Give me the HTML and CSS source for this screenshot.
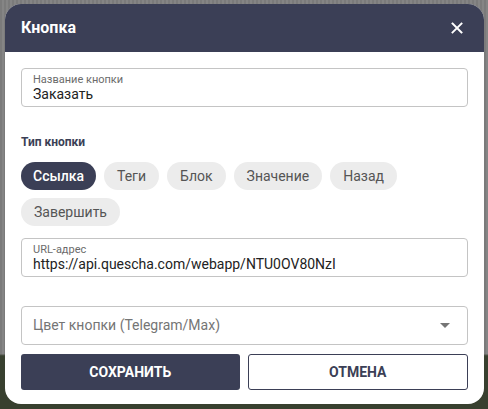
FILE: index.html
```html
<!DOCTYPE html>
<html lang="ru">
<head>
<meta charset="utf-8">
<link rel="stylesheet" href="styles.css">
</head>
<body>
<div class="backdrop">
  <div class="dialog">
    <div class="header">
      <span class="title">Кнопка</span>
      <svg class="close" width="12" height="12" viewBox="0 0 12 12"><path d="M1.5 1.5 L10.5 10.5 M10.5 1.5 L1.5 10.5" stroke="#fff" stroke-width="1.9" stroke-linecap="square"/></svg>
    </div>
    <div class="body">
      <div class="field">
        <div class="label">Название кнопки</div>
        <div class="value">Заказать</div>
      </div>
      <div class="section">Тип кнопки</div>
      <div class="chips">
        <span class="chip active">Ссылка</span>
        <span class="chip">Теги</span>
        <span class="chip">Блок</span>
        <span class="chip">Значение</span>
        <span class="chip">Назад</span>
        <span class="chip">Завершить</span>
      </div>
      <div class="field url">
        <div class="label">URL-адрес</div>
        <div class="value">https://api.quescha.com/webapp/NTU0OV80NzI</div>
      </div>
      <div class="select">
        <span class="placeholder">Цвет кнопки (Telegram/Max)</span>
        <svg class="arrow" width="10" height="5" viewBox="0 0 10 5"><path d="M0 0 H10 L5 5 Z" fill="#757575"/></svg>
      </div>
      <div class="actions">
        <button class="btn primary">СОХРАНИТЬ</button>
        <button class="btn secondary">ОТМЕНА</button>
      </div>
    </div>
  </div>
</div>
</body>
</html>
```
FILE: styles.css
```css
html, body {
  margin: 0;
  padding: 0;
  width: 488px;
  height: 409px;
  overflow: hidden;
  font-family: Roboto, "Liberation Sans", sans-serif;
}
.backdrop {
  width: 488px;
  height: 409px;
  box-sizing: border-box;
  padding: 4px 4px 0 5px;
  background:
    linear-gradient(to bottom, transparent 0, transparent 86.5%, #38402f 87%, #38402f 100%),
    repeating-linear-gradient(to right, #7b7b7b 0, #7b7b7b 2px, #858585 2px, #858585 4px),
    #808080;
}
.dialog {
  width: 479px;
  height: 400px;
  background: #fff;
  border-radius: 16px;
  overflow: hidden;
  display: flex;
  flex-direction: column;
}
.header {
  height: 48px;
  flex: none;
  background: #3b3f56;
  display: flex;
  align-items: center;
  justify-content: space-between;
  padding: 0 21px 0 16px;
}
.title {
  color: #fff;
  font-size: 16px;
  font-weight: 700;
  margin-top: -1px;
}
.close {
  display: block;
  margin-top: -1px;
}
.body {
  padding: 16px 16px 0 16px;
  display: flex;
  flex-direction: column;
}
.field {
  height: 39px;
  flex: none;
  box-sizing: border-box;
  border: 1px solid #c4c4c4;
  border-radius: 4px;
  padding: 4px 11px 0 11px;
}
.label {
  font-size: 11px;
  color: #6b6b6b;
  line-height: 13px;
}
.value {
  font-size: 14px;
  color: #222;
  line-height: 17px;
}
.section {
  margin-top: 28px;
  font-size: 12px;
  font-weight: 700;
  color: #3b3f56;
  line-height: 14px;
}
.chips {
  margin-top: 13px;
  display: flex;
  flex-wrap: wrap;
  gap: 8px 8px;
  width: 400px;
}
.chip {
  height: 28px;
  line-height: 28px;
  border-radius: 14px;
  background: #ececec;
  color: #555;
  font-size: 14px;
  padding: 0 13px;
}
.chip.active {
  background: #3b3f56;
  color: #fff;
  font-weight: 500;
  padding: 0 12px;
}
.url {
  margin-top: 12px;
}
.select {
  margin-top: 29px;
  height: 39px;
  flex: none;
  box-sizing: border-box;
  border: 1px solid #c4c4c4;
  border-radius: 4px;
  padding: 0 17px 0 11px;
  display: flex;
  align-items: center;
  justify-content: space-between;
}
.placeholder {
  font-size: 14px;
  color: #757575;
  margin-top: -2px;
}
.arrow { display: block; }
.actions {
  margin-top: 9px;
  display: flex;
  gap: 8px;
}
.btn {
  flex: 1;
  height: 36px;
  border-radius: 3px;
  font-family: Roboto, "Liberation Sans", sans-serif;
  font-size: 14px;
  font-weight: 700;
  padding: 0;
}
.primary {
  background: #3b3f56;
  color: #fff;
  border: none;
}
.secondary {
  background: #fff;
  color: #3b3f56;
  border: 1px solid #3b3f56;
}
```
